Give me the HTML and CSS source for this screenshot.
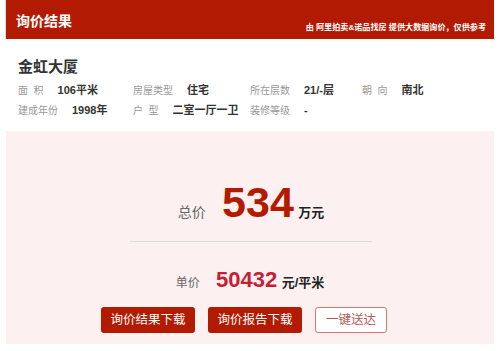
FILE: index.html
```html
<!DOCTYPE html>
<html lang="zh-CN">
<head>
  <meta charset="UTF-8">
  <title>询价结果</title>
  <link rel="stylesheet" href="styles.css">
</head>
<body>
  <div class="result">
    <!-- 头部 -->
    <div class="result-head">
      <h2>询价结果</h2>
      <span class="source">由 阿里拍卖&amp;诺品找房 提供大数据询价，仅供参考</span>
    </div>

    <!-- 房屋信息 -->
    <div class="house">
      <h3>金虹大厦</h3>
      <div class="house-info">
        <div class="item"><span class="label">面&nbsp;&nbsp;积</span><span class="value">106平米</span></div>
        <div class="item"><span class="label">房屋类型</span><span class="value">住宅</span></div>
        <div class="item"><span class="label">所在层数</span><span class="value">21/-层</span></div>
        <div class="item"><span class="label">朝&nbsp;&nbsp;向</span><span class="value">南北</span></div>
        <div class="item"><span class="label">建成年份</span><span class="value">1998年</span></div>
        <div class="item"><span class="label">户&nbsp;&nbsp;型</span><span class="value">二室一厅一卫</span></div>
        <div class="item"><span class="label">装修等级</span><span class="value">-</span></div>
      </div>
    </div>

    <!-- 价格 -->
    <div class="price-box">
      <div class="total">
        <span class="total-label">总价</span>
        <span class="total-num">534</span>
        <span class="unit">万元</span>
      </div>
      <div class="single">
        <span class="single-label">单价</span>
        <span class="single-num">50432</span>
        <span class="unit">元/平米</span>
      </div>
      <div class="actions">
        <a class="btn">询价结果下载</a>
        <a class="btn">询价报告下载</a>
        <a class="btn btn-line">一键送达</a>
      </div>
    </div>
  </div>
</body>
</html>
```

FILE: styles.css
```css
body {
  margin: 0;
  padding: 0;
  background: #fff;
  font-family: "Liberation Sans", "Noto Sans CJK SC", sans-serif;
  color: #333;
}

.result {
  margin: 0 5px 0 6px;
}

/* 头部 */
.result-head {
  height: 39px;
  background: #b21b02;
  box-shadow: -1px 0 0 #dcdcdc;
  display: flex;
  justify-content: space-between;
  align-items: center;
  padding: 0 8px 0 10px;
  color: #fff;
}

.result-head h2 {
  margin: 0;
  font-size: 14px;
  font-weight: bold;
}

.result-head .source {
  font-size: 8.1px;
  font-weight: bold;
  margin-top: 14px;
}

/* 房屋信息 */
.house {
  padding: 18px 0 0 12px;
  height: 74px;
}

.house h3 {
  margin: 0 0 4px;
  font-size: 15px;
  line-height: 20px;
  font-weight: bold;
  color: #333;
}

.house-info {
  display: grid;
  grid-template-columns: 115px 117px 112px auto;
  row-gap: 1px;
  font-size: 11px;
  line-height: 18px;
}

.house-info .label {
  font-size: 10px;
  color: #999;
  margin-right: 14px;
}

.house-info .value {
  font-weight: bold;
  color: #333;
}

/* 价格 */
.price-box {
  background: #fdf0f0;
  height: 213px;
  display: flex;
  flex-direction: column;
  align-items: center;
}

.total {
  width: 242px;
  margin-left: 2px;
  padding-top: 46px;
  padding-bottom: 3px;
  border-bottom: 1px solid #dcdcdc;
  text-align: center;
  line-height: 50px;
}

.total-label {
  font-size: 14px;
  color: #666;
  margin-right: 12px;
}

.total-num {
  font-size: 43px;
  font-weight: bold;
  color: #b21b00;
}

.unit {
  font-size: 13px;
  font-weight: bold;
  color: #222;
}

.single {
  margin-top: 23px;
  line-height: 30px;
}

.single-label {
  font-size: 12px;
  color: #666;
  margin-right: 12px;
}

.single-num {
  font-size: 22px;
  font-weight: bold;
  color: #c41f36;
}

.actions {
  display: flex;
  gap: 13px;
  margin: 9px 12px 0 0;
}

.btn {
  display: block;
  box-sizing: border-box;
  width: 94px;
  height: 26px;
  line-height: 26px;
  text-align: center;
  font-size: 12.5px;
  color: #fff;
  background: #b21b00;
  border-radius: 3px;
}

.btn-line {
  width: 72px;
  line-height: 24px;
  background: #fff;
  border: 1px solid #d9776c;
  color: #b05a52;
}
```
